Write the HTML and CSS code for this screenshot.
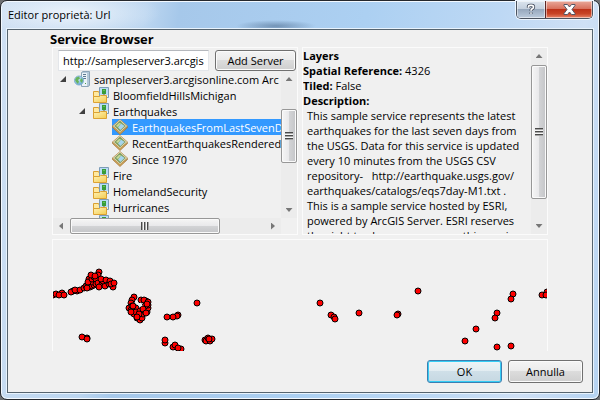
FILE: index.html
```html
<!DOCTYPE html>
<html lang="it">
<head>
<meta charset="utf-8">
<title>Editor proprietà: Url</title>
<link rel="stylesheet" href="styles.css">
</head>
<body>
<svg class="defs" aria-hidden="true">
  <defs>
    <linearGradient id="gold" x1="0" y1="0" x2="1" y2="1"><stop offset="0" stop-color="#fff3b8"/><stop offset="1" stop-color="#f3cc4f"/></linearGradient>
    <radialGradient id="sea" cx=".35" cy=".3" r=".8"><stop offset="0" stop-color="#d5efff"/><stop offset="1" stop-color="#5c9fd0"/></radialGradient>
    <symbol id="server" viewBox="0 0 16 16">
      <path d="M7.500 1.500 9 .5h6.500v14l-1.500 1H7.500z" fill="#b3c8d9" stroke="#8ba3b6"/>
      <path d="M8 2h5v13H8z" fill="#eaf2f8"/>
      <path d="M9 3.500h3M9 5.500h3M9 7.500h3" stroke="#5d7890"/>
      <path d="M11 12.500h1" stroke="#4c9a4c"/>
      <circle cx="5" cy="9.500" r="4.500" fill="url(#sea)" stroke="#7fb0d0"/>
      <path d="M2 6.500l3-1 1 2-2 1.500 1 1.500-1 2.500-2-2-1-2zM7 7l2 2-1 3-2-2z" fill="#68b35b"/>
    </symbol>
    <symbol id="folder" viewBox="0 0 16 16">
      <path d="M.5 14.500v-10h5l1 2h6v8z" fill="#ffe9a0" stroke="#d9a032"/>
      <path d="M6.500.5h9v10h-9z" fill="#b9dcf6" stroke="#7c9cb8"/>
      <path d="M7 8h8v2H7z" fill="#e8f1f8"/>
      <path d="M9 2h4v5H9z" fill="#379c39"/>
      <path d="M10 3h2v1h-2z" fill="#62c057"/>
      <path d="M11 7v2" stroke="#80602c"/>
      <path d="M.5 15.500v-6h6l1-1h6v7z" fill="url(#gold)" stroke="#dca233"/>
    </symbol>
    <symbol id="layer" viewBox="0 0 16 16">
      <path d="M.5 8.500 8 15.500l7.500-7v-1L8 13 .5 7z" fill="#d9a852" stroke="#96703a" stroke-width=".7"/>
      <path d="M.5 7 8 .5 15.500 7 8 13.500z" fill="#f9edc5" stroke="#b08b4f" stroke-width=".8"/>
      <path d="M2.500 7 8 2l5.500 5L8 12z" fill="#7da35c" stroke="#728759" stroke-width=".6"/>
      <path d="M6 8.500 9 4.500l3.500 2.500L8.500 11z" fill="#a7d5ed"/>
      <path d="M4 7l3-3 2 0-3 4z" fill="#c9d99a"/>
    </symbol>
  </defs>
</svg>

<div class="window" role="dialog" aria-labelledby="title">
  <header class="titlebar">
    <span class="title" id="title">Editor proprietà: Url</span>
    <div class="caption">
      <button class="cap help" type="button" aria-label="Guida">
        <svg width="10" height="13" viewBox="0 0 12 14"><path d="M3 5V3.500Q3 2 5 2h2q2 0 2 2 0 1.500-1.500 2.200Q6 7 6 8.500M6 10.500v1.500" fill="none" stroke="#454e5f" stroke-width="4"/><path d="M3 5V3.500Q3 2 5 2h2q2 0 2 2 0 1.500-1.500 2.200Q6 7 6 8.500M6 10.500v1.500" fill="none" stroke="#fff" stroke-width="2"/></svg>
      </button>
      <button class="cap close" type="button" aria-label="Chiudi">
        <svg width="13" height="11" viewBox="0 0 13 11"><path d="M1 .5h3.500l2 2.500 2-2.500H12v1L9 5.500l3 4v1H8.500l-2-2.500-2 2.500H1v-1l3-4-3-4z" fill="#fff" stroke="#535666"/></svg>
      </button>
    </div>
  </header>

  <main class="client">
    <h1 class="heading">Service Browser</h1>
    <div class="panels">
      <section class="panel browser">
        <form class="address">
          <input class="url" type="text" aria-label="URL del server" value="http://sampleserver3.arcgis">
          <button class="button" type="button">Add Server</button>
        </form>
        <div class="treebox">
          <ul class="tree">
            <li class="row"><i class="twisty"></i><svg class="icon"><use href="#server"/></svg><span class="label">sampleserver3.arcgisonline.com Arc</span></li>
            <li class="row l2"><svg class="icon"><use href="#folder"/></svg><span class="label">BloomfieldHillsMichigan</span></li>
            <li class="row l2 open"><i class="twisty"></i><svg class="icon"><use href="#folder"/></svg><span class="label">Earthquakes</span></li>
            <li class="row l3"><span class="selected"><svg class="icon"><use href="#layer"/></svg><span class="label">EarthquakesFromLastSevenD</span></span></li>
            <li class="row l3"><svg class="icon"><use href="#layer"/></svg><span class="label">RecentEarthquakesRendered</span></li>
            <li class="row l3"><svg class="icon"><use href="#layer"/></svg><span class="label">Since 1970</span></li>
            <li class="row l2"><svg class="icon"><use href="#folder"/></svg><span class="label">Fire</span></li>
            <li class="row l2"><svg class="icon"><use href="#folder"/></svg><span class="label">HomelandSecurity</span></li>
            <li class="row l2"><svg class="icon"><use href="#folder"/></svg><span class="label">Hurricanes</span></li>
            <li class="row l2"><svg class="icon"><use href="#folder"/></svg></li>
          </ul>
          <div class="scroll vertical tree-v"><i class="arrow up"></i><div class="track"><i class="thumb"></i></div><i class="arrow down"></i></div>
          <div class="scroll horizontal"><i class="arrow left"></i><div class="track"><i class="thumb"></i></div><i class="arrow right"></i></div>
        </div>
      </section>

      <section class="panel details">
        <div class="info">
          <p><b>Layers</b></p>
          <p><b>Spatial Reference:</b> 4326</p>
          <p><b>Tiled:</b> False</p>
          <p><b>Description:</b></p>
          <p class="description">This sample service represents the latest<br>earthquakes for the last seven days from<br>the USGS. Data for this service is updated<br>every 10 minutes from the USGS CSV<br>repository- &nbsp; http://earthquake.usgs.gov/<br>earthquakes/catalogs/eqs7day-M1.txt .<br>This is a sample service hosted by ESRI,<br>powered by ArcGIS Server. ESRI reserves<br>the right to change or remove this service</p>
        </div>
        <div class="scroll vertical info-v"><i class="arrow up"></i><div class="track"><i class="thumb"></i></div><i class="arrow down"></i></div>
      </section>
    </div>

    <section class="map" aria-label="Mappa">
      <svg class="quakes" viewBox="53 240 494 111" preserveAspectRatio="xMinYMin slice">
        <g>
          <circle cx="53" cy="295" r="3"/><circle cx="56" cy="294" r="3"/><circle cx="62" cy="293" r="3"/><circle cx="59" cy="295" r="3"/><circle cx="64" cy="295" r="3"/><circle cx="73" cy="291" r="3"/><circle cx="71" cy="292" r="3"/><circle cx="77" cy="291" r="3"/><circle cx="75" cy="290" r="3"/><circle cx="80" cy="290" r="3"/>
          <circle cx="84" cy="288" r="3"/><circle cx="86" cy="286" r="3"/><circle cx="88" cy="284" r="3"/><circle cx="90" cy="287" r="3"/><circle cx="92" cy="286" r="3"/><circle cx="87" cy="288" r="3"/><circle cx="94" cy="285" r="3"/><circle cx="92" cy="282" r="3"/><circle cx="96" cy="284" r="3"/><circle cx="89" cy="279" r="3"/><circle cx="88" cy="282" r="3"/><circle cx="92" cy="279" r="3"/><circle cx="94" cy="277" r="3"/><circle cx="91" cy="275" r="3"/><circle cx="99" cy="272" r="3"/><circle cx="98" cy="275" r="3"/><circle cx="96" cy="279" r="3"/><circle cx="95" cy="276" r="3"/>
          <circle cx="98" cy="283" r="3"/><circle cx="102" cy="284" r="3"/><circle cx="99" cy="287" r="3"/><circle cx="105" cy="286" r="3"/><circle cx="103" cy="281" r="3"/><circle cx="101" cy="279" r="3"/><circle cx="106" cy="280" r="3"/><circle cx="109" cy="284" r="3"/><circle cx="110" cy="281" r="3"/><circle cx="113" cy="287" r="3"/><circle cx="111" cy="284" r="3"/><circle cx="114" cy="283" r="3"/>
          <circle cx="134" cy="297" r="3"/><circle cx="132" cy="300" r="3"/><circle cx="131" cy="303" r="3"/><circle cx="129" cy="308" r="3"/><circle cx="131" cy="310" r="3"/><circle cx="134" cy="314" r="3"/><circle cx="137" cy="318" r="3"/><circle cx="140" cy="320" r="3"/><circle cx="142" cy="318" r="3"/><circle cx="143" cy="314" r="3"/><circle cx="147" cy="312" r="3"/><circle cx="148" cy="308" r="3"/><circle cx="148" cy="305" r="3"/><circle cx="146" cy="301" r="3"/><circle cx="141" cy="300" r="3"/><circle cx="144" cy="300" r="3"/><circle cx="148" cy="302" r="3"/><circle cx="145" cy="306" r="3"/><circle cx="147" cy="304" r="3"/><circle cx="132" cy="306" r="3"/><circle cx="136" cy="308" r="3"/><circle cx="136" cy="312" r="3"/><circle cx="140" cy="311" r="3"/><circle cx="143" cy="309" r="3"/><circle cx="139" cy="314" r="3"/><circle cx="131" cy="312" r="3"/><circle cx="137" cy="317" r="3"/><circle cx="146" cy="313" r="3"/><circle cx="133" cy="306" r="3"/>
          <circle cx="178" cy="315" r="3"/><circle cx="177" cy="316" r="3"/><circle cx="173" cy="317" r="3"/><circle cx="167" cy="317" r="3"/><circle cx="197" cy="303" r="3"/><circle cx="87" cy="338" r="3"/><circle cx="82" cy="337" r="3"/><circle cx="87" cy="339" r="3"/>
          <circle cx="165" cy="343" r="3"/><circle cx="165" cy="340" r="3"/><circle cx="173" cy="347" r="3"/><circle cx="175" cy="345" r="3"/><circle cx="181" cy="349" r="3"/><circle cx="178" cy="348" r="3"/><circle cx="205" cy="340" r="3"/><circle cx="206" cy="341" r="3"/><circle cx="208" cy="338" r="3"/><circle cx="210" cy="341" r="3"/><circle cx="212" cy="339" r="3"/><circle cx="209" cy="339" r="3"/>
          <circle cx="320" cy="303" r="3"/><circle cx="331" cy="315" r="3"/><circle cx="334" cy="317" r="3"/><circle cx="335" cy="319" r="3"/><circle cx="359" cy="313" r="3"/><circle cx="398" cy="314" r="3"/><circle cx="397" cy="315" r="3"/><circle cx="418" cy="291" r="3"/><circle cx="465" cy="341" r="3"/><circle cx="476" cy="329" r="3"/><circle cx="497" cy="313" r="3"/><circle cx="495" cy="318" r="3"/><circle cx="513" cy="294" r="3"/><circle cx="511" cy="299" r="3"/><circle cx="497" cy="347" r="3"/><circle cx="511" cy="346" r="3"/><circle cx="547" cy="292" r="3"/><circle cx="542" cy="295" r="3"/><circle cx="546" cy="295" r="3"/>
        </g>
        <path d="M138 303l2 4M140 303l2 3" stroke="#f0f0f0" stroke-width="1.500"/>
      </svg>
    </section>

    <footer class="actions">
      <button class="button wide default" type="button">OK</button>
      <button class="button wide" type="button">Annulla</button>
    </footer>
  </main>
</div>
</body>
</html>
```
FILE: styles.css
```css
* { box-sizing: border-box; }

body {
  margin: 0;
  background: #6d6f72;
  font: 11px/15px "Open Sans", "Noto Sans", sans-serif;
  color: #000;
}

button, input { font: inherit; color: inherit; }
.defs { position: absolute; width: 0; height: 0; }

.window {
  display: flex;
  flex-direction: column;
  height: 100vh;
  padding: 0 6px 6px;
  border: 1px solid #25282d;
  border-radius: 7px;
  background:
    radial-gradient(ellipse 90px 24px at 70px 12px, rgba(240, 246, 252, .9), rgba(240, 246, 252, 0)),
    radial-gradient(ellipse 40px 6px at 275px 25px, rgba(70, 100, 135, .55), rgba(70, 100, 135, 0)),
    linear-gradient(100deg, #cfe0f3 0, #bcd6f0 22%, #a6c8ea 27%, #acd0f2 55%, #bdd8f4 75%, #cfe0f5 88%, #b5d3f2 100%);
  box-shadow: inset 0 0 0 1px #f3f9ff;
}

.titlebar {
  display: flex;
  flex: none;
  justify-content: space-between;
  align-items: flex-start;
  height: 28px;
}

.title { padding: 6px 0 0 1px; }

.caption {
  display: flex;
  border: 1px solid #4b535f;
  border-top: 0;
  border-radius: 0 0 5px 5px;
  box-shadow: 0 0 0 1px #eef6ff;
  overflow: hidden;
}

.cap {
  display: flex;
  align-items: center;
  justify-content: center;
  width: 28px;
  height: 17px;
  padding: 0;
  border: 0;
  box-shadow: inset 0 0 0 1px rgba(255, 255, 255, .5);
}

.help { background: linear-gradient(#dbe4ee, #c3cfdd 48%, #97a8bd 50%, #bccbdc); }

.close {
  width: 47px;
  border-left: 1px solid #5b2525;
  background: linear-gradient(#e9a99b, #d8705c 46%, #bd3219 50%, #c84426 75%, #e8866a);
}

.client {
  display: flex;
  flex: 1;
  flex-direction: column;
  min-height: 0;
  border: 1px solid #56646f;
  background: #f0f0f0;
  box-shadow: 0 0 0 1px #e8f3fd;
}

.heading {
  flex: none;
  margin: 0;
  padding: 2px 0 0 42px;
  font-size: 13px;
  line-height: 15px;
  font-weight: 700;
}

.panels {
  display: grid;
  flex: 188 1 0;
  grid-template-columns: 1fr 1fr;
  gap: 4px;
  min-height: 0;
  margin: 0 44px 4px;
}

.panel { min-width: 0; min-height: 0; border: 1px solid #fbfbfb; overflow: hidden; }
.browser { display: flex; flex-direction: column; }
.details { display: flex; }

.address { display: flex; flex: none; gap: 6px; margin: 0; padding: 2px 1px 0 5px; height: 23px; }

.url {
  flex: 1;
  min-width: 0;
  height: 21px;
  padding: 0 0 0 4px;
  border: 1px solid #e3e6ea;
  border-top-color: #b5b8bd;
  background: #fff;
}

.button {
  flex: none;
  width: 81px;
  height: 21px;
  padding: 0;
  border: 1px solid #707070;
  border-radius: 3px;
  background: linear-gradient(#f4f4f4, #ebebeb 48%, #dcdcdc 50%, #cfcfcf);
  box-shadow: inset 0 0 0 1px #fbfbfb;
}

.wide { width: 75px; height: 23px; }

.default {
  border-color: #3c7fb1;
  background: linear-gradient(#eef4f7, #e2ecf1 48%, #cfdfe8 50%, #c6d8e2);
  box-shadow: inset 0 0 0 1px #35cdf5;
}

.treebox {
  display: grid;
  flex: 1;
  grid-template: minmax(0, 1fr) 16px / minmax(0, 1fr) 16px;
  min-height: 0;
}

.tree { min-height: 0; margin: 0; padding: 0 0 0 5px; list-style: none; overflow: hidden; }
.row { display: flex; align-items: center; height: 16px; white-space: nowrap; }
.icon { display: block; flex: none; width: 16px; height: 16px; }
.label { padding-left: 4px; }
.l2 { padding-left: 35px; }
.l2.open { padding-left: 19px; }
.l3 { padding-left: 54px; }
.selected { display: flex; flex: 1; align-items: center; background: #3399ff; color: #fff; }

.twisty {
  flex: none;
  width: 6px;
  height: 6px;
  margin: 0 8px 0 2px;
  background: #404040;
  clip-path: polygon(100% 0, 100% 100%, 0 100%);
}

.scroll { display: flex; background: #ececec; }
.vertical { flex-direction: column; width: 16px; }
.vertical .track { display: flex; flex: 1; flex-direction: column; }
.horizontal .track { display: flex; flex: 1; }
.arrow { display: flex; flex: none; align-items: center; justify-content: center; width: 16px; height: 16px; }
.arrow::before { content: ""; width: 7px; height: 4px; background: #777; }
.up::before { clip-path: polygon(50% 0, 100% 100%, 0 100%); }
.down::before { clip-path: polygon(0 0, 100% 0, 50% 100%); }
.left::before { width: 4px; height: 7px; clip-path: polygon(100% 0, 100% 100%, 0 50%); }
.right::before { width: 4px; height: 7px; clip-path: polygon(0 0, 100% 50%, 0 100%); }

.thumb {
  display: flex;
  align-items: center;
  justify-content: center;
  border: 1px solid #979797;
  border-radius: 2px;
  background: linear-gradient(90deg, #f5f5f5, #e9e9eb 48%, #d3d4d6 50%, #c4c5c8);
  box-shadow: inset 0 0 0 1px #fafafa;
}

.thumb::before {
  content: "";
  width: 8px;
  height: 8px;
  background: repeating-linear-gradient(#4a4a4a 0 1px, #a8a8a8 1px 2px, #f6f6f6 2px 3px);
}

.horizontal .thumb { background: linear-gradient(#f5f5f5, #e9e9eb 48%, #d3d4d6 50%, #c4c5c8); }
.horizontal .thumb::before { background: repeating-linear-gradient(90deg, #4a4a4a 0 1px, #a8a8a8 1px 2px, #f6f6f6 2px 3px); }

.tree-v .track { padding: 22px 0 39px; }
.tree-v .thumb { flex: 1; }
.horizontal .track { padding: 0 45px 0 1px; }
.horizontal .thumb { flex: 1; }
.info-v .track { padding: 1px 0 19px; }
.info-v .thumb { flex: 1; }

.info { flex: 1; min-width: 0; overflow: hidden; white-space: nowrap; }
.info p { margin: 0; }
.info .description { padding-left: 4px; }

/* The top border counts toward the flex base size, so the grow factor covers the rest. */
.map {
  flex: 111 1 0;
  min-height: 0;
  margin: 0 44px;
  border: 1px solid #fbfbfb;
  border-bottom: 0;
  overflow: hidden;
}

.quakes { display: block; width: 100%; height: 100%; }
.quakes circle { fill: #f00; stroke: #000; }

.actions { display: flex; flex: none; justify-content: flex-end; gap: 6px; padding: 9px; }
```
